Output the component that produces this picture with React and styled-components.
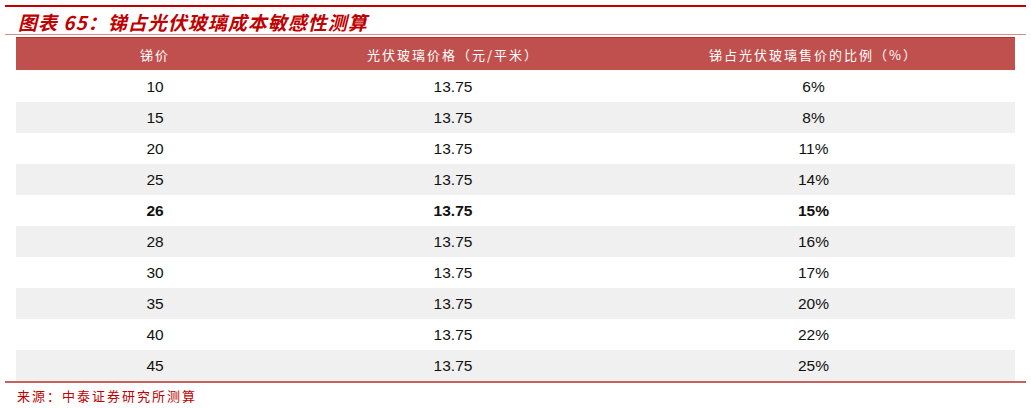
import React from 'react';
import styled, { createGlobalStyle } from 'styled-components';

const Global = createGlobalStyle`
  body { margin: 0; background: #fff; }
`;

const Page = styled.div`
  width: 1031px;
  height: 408px;
  padding: 5px 5px 0 5px;
  box-sizing: border-box;
`;

const TopRule = styled.div`
  height: 2px;
  background: #c00000;
`;

const Title = styled.div`
  height: 24px;
  padding: 3px 0 0 13px;
  font-family: 'Noto Sans CJK SC', 'Liberation Sans', sans-serif;
  font-style: italic;
  font-weight: 700;
  font-size: 19px;
  line-height: 24px;
  color: #c00000;
  letter-spacing: 1px;
  white-space: nowrap;
`;

const Rule = styled.div`
  height: ${p => p.$h || 1}px;
  background: ${p => p.$color};
`;

const Table = styled.div`
  margin: 2px 11px 0 11px;
  border-top: 1px solid #b8312f;
`;

const Row = styled.div`
  display: grid;
  grid-template-columns: 278px 318px 1fr;
  height: ${p => (p.$head ? 33 : 31)}px;
  box-sizing: border-box;
  align-items: center;
  background: ${p => (p.$head ? '#c0504d' : p.$alt ? '#f0f0f0' : '#fff')};
  border-bottom: ${p => (p.$head ? '1px solid #fff' : 'none')};
`;

const HeadCell = styled.div`
  text-align: center;
  color: #fff;
  font-family: 'Noto Sans CJK SC', serif;
  font-size: 13px;
  letter-spacing: 2px;
  white-space: nowrap;
`;

const Cell = styled.div`
  text-align: center;
  color: #111;
  font-family: 'Liberation Sans', Arial, sans-serif;
  font-size: 15.5px;
  font-weight: ${p => (p.$bold ? 700 : 400)};
`;

const BottomRule = styled.div`
  height: 2px;
  background: #c9605d;
`;

const Source = styled.div`
  padding: 3px 0 0 12px;
  font-family: 'Noto Sans CJK SC', serif;
  font-size: 13px;
  letter-spacing: 2px;
  color: #c00000;
  white-space: nowrap;
`;

const rows = [
  ['10', '13.75', '6%'],
  ['15', '13.75', '8%'],
  ['20', '13.75', '11%'],
  ['25', '13.75', '14%'],
  ['26', '13.75', '15%'],
  ['28', '13.75', '16%'],
  ['30', '13.75', '17%'],
  ['35', '13.75', '20%'],
  ['40', '13.75', '22%'],
  ['45', '13.75', '25%'],
];

export default function App() {
  return (
    <Page>
      <Global />
      <TopRule />
      <Title>图表 65：锑占光伏玻璃成本敏感性测算</Title>
      <Rule $color="#d98a88" />
      <Table>
        <Row $head>
          <HeadCell>锑价</HeadCell>
          <HeadCell>光伏玻璃价格（元/平米）</HeadCell>
          <HeadCell>锑占光伏玻璃售价的比例（%）</HeadCell>
        </Row>
        {rows.map((r, i) => (
          <Row key={i} $alt={i % 2 === 1}>
            {r.map((c, j) => (
              <Cell key={j} $bold={r[0] === '26'}>{c}</Cell>
            ))}
          </Row>
        ))}
      </Table>
      <BottomRule />
      <Source>来源：中泰证券研究所测算</Source>
    </Page>
  );
}
